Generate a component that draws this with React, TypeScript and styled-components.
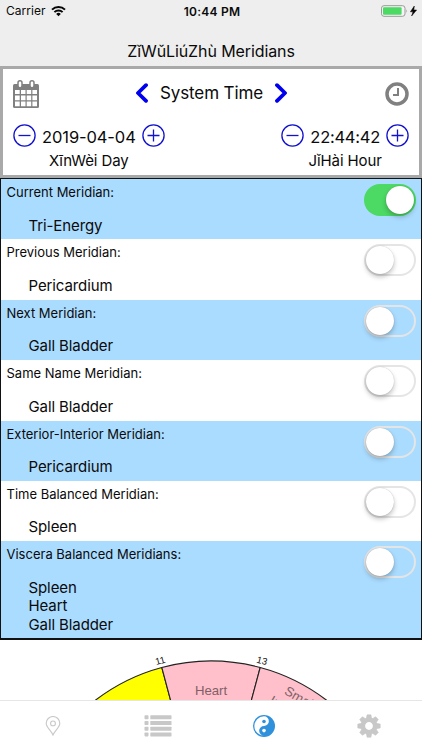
import React from "react";
import styled, { createGlobalStyle } from "styled-components";

const Global = createGlobalStyle`
  * { box-sizing: border-box; }
  body { margin: 0; background: #fff; overflow: hidden; }
`;

const Screen = styled.main`
  width: 422px;
  height: 750px;
  display: flex;
  flex-direction: column;
  overflow: hidden;
  background: #fff;
  color: #0a0a0a;
  font-family: Inter, "Liberation Sans", sans-serif;
`;

const Label = styled.span<{ $size: number; $spacing?: number; $weight?: number }>`
  font-size: ${(p) => p.$size}px;
  letter-spacing: ${(p) => p.$spacing ?? 0}px;
  font-weight: ${(p) => p.$weight ?? 400};
  white-space: nowrap;
`;

const Header = styled.header`
  height: 66px;
  flex: none;
  background: #eee;
`;

const StatusBar = styled.div`
  height: 22px;
  padding: 0 4px 0 6px;
  display: grid;
  grid-template-columns: 1fr auto 1fr;
  align-items: center;
`;

const StatusGroup = styled.div<{ $end?: boolean }>`
  display: flex;
  align-items: center;
  gap: 5px;
  padding-bottom: 1px;
  justify-content: ${(p) => (p.$end ? "flex-end" : "flex-start")};
`;

const Title = styled.h1`
  margin: 0;
  height: 44px;
  padding-top: 14px;
  display: flex;
  align-items: center;
  justify-content: center;
`;

const Panel = styled.section`
  height: 112px;
  flex: none;
  border: 3px solid #a9a9a9;
  padding: 9px 10px 0;
`;

const ModeRow = styled.div`
  height: 32px;
  display: flex;
  align-items: center;
  justify-content: space-between;
`;

const Mode = styled.div`
  margin: -3px 0 0 -1px;
  display: flex;
  align-items: center;
  gap: 12px;
`;

const Steppers = styled.div`
  margin-top: 13px;
  display: flex;
  justify-content: space-between;
`;

const StepperBlock = styled.div`
  display: flex;
  flex-direction: column;
  align-items: center;
`;

const Stepper = styled.div`
  height: 25px;
  display: flex;
  align-items: center;
  gap: 6px;
`;

const StepperValue = styled.div`
  padding-top: 2px;
`;

const Caption = styled.div`
  height: 24px;
  display: flex;
  align-items: center;
`;

const PlainButton = styled.button`
  border: 0;
  padding: 0;
  background: none;
  display: flex;
`;

const List = styled.section`
  height: 462px;
  flex: none;
  border: 1.5px solid #111;
  border-width: 1px 1px 2px 1px;
`;

const Row = styled.div<{ $shaded: boolean; $tall: boolean }>`
  height: ${(p) => (p.$tall ? 97 : 60.4)}px;
  padding: 4px 5px 0 5.5px;
  display: flex;
  justify-content: space-between;
  background: ${(p) => (p.$shaded ? "#aadcff" : "#fff")};
`;

const RowText = styled.div`
  display: flex;
  flex-direction: column;
  line-height: 18.5px;
`;

const Values = styled.div`
  margin: 15px 0 0 22px;
  display: flex;
  flex-direction: column;
`;

const Switch = styled.button<{ $on: boolean }>`
  width: 52px;
  height: 32px;
  margin-top: 1px;
  padding: ${(p) => (p.$on ? "2px" : "0")};
  border: 2px solid ${(p) => (p.$on ? "#4cd964" : "#e5e5e5")};
  border-width: ${(p) => (p.$on ? 0 : 2)}px;
  border-radius: 16px;
  background: ${(p) => (p.$on ? "#4cd964" : "transparent")};
  display: flex;
  justify-content: ${(p) => (p.$on ? "flex-end" : "flex-start")};
`;

const Knob = styled.span`
  width: 28px;
  height: 28px;
  border-radius: 50%;
  background: #fff;
  box-shadow: 0 3px 5px rgba(0, 0, 0, 0.24), 0 0 1px rgba(0, 0, 0, 0.25);
`;

const WheelArea = styled.section`
  height: 60px;
  flex: none;
  overflow: hidden;
  svg { display: block; }
`;

const TabBar = styled.nav`
  height: 50px;
  flex: none;
  border-top: 1px solid #e6e6e6;
  background: #fff;
  display: grid;
  grid-template-columns: repeat(4, 1fr);
`;

const Tab = styled.button`
  border: 0;
  padding: 0;
  background: none;
  display: flex;
  align-items: center;
  justify-content: center;
`;

const Wifi = () => (
  <svg width="15" height="12" viewBox="0 0 15 12" fill="none" stroke="#050505" strokeWidth="2">
    <path d="M1 4.6a9.2 9.2 0 0 1 13 0M3.4 7.1a5.8 5.8 0 0 1 8.2 0" />
    <path d="M5.2 8.9a3.3 3.3 0 0 1 4.6 0L7.5 11.3z" fill="#050505" stroke="none" />
  </svg>
);

const Battery = () => (
  <svg width="37" height="12" viewBox="0 0 37 12">
    <rect x=".5" y=".7" width="23.5" height="10.6" rx="2.5" fill="#f5f5f5" stroke="#999" />
    <rect x="2" y="2.2" width="18.6" height="7.6" rx="1" fill="#4cd964" />
    <path d="M25.3 4.2q1.5 1.8 0 3.6z" fill="#999" />
    <path d="M33.3 1 29.4 6.8h2.6L30.6 11l5-6h-2.8z" fill="#050505" stroke="#050505" strokeWidth=".5" />
  </svg>
);

const Calendar = () => (
  <svg width="26" height="28" viewBox="0 0 26 28">
    <rect y="4" width="26" height="24" rx="1.5" fill="#808080" />
    <path
      fill="#fff"
      d="M2 10h4.7v4H2zM8 10h4.5v4H8zM13.7 10h4.5v4h-4.5zM19.4 10H24v4h-4.6zM2 15.4h4.7v4.8H2zM8 15.4h4.5v4.8H8zM13.7 15.4h4.5v4.8h-4.5zM19.4 15.4H24v4.8h-4.6zM2 21.6h4.7v4.7H2zM8 21.6h4.5v4.7H8zM13.7 21.6h4.5v4.7h-4.5zM19.4 21.6H24v4.7h-4.6z"
    />
    <g fill="#fff" stroke="#808080" strokeWidth="1.5">
      <rect x="5" y=".8" width="4" height="7" rx="2" />
      <rect x="17" y=".8" width="4" height="7" rx="2" />
    </g>
  </svg>
);

const Clock = () => (
  <svg width="24" height="24" viewBox="0 0 24 24" fill="none" stroke="#808080">
    <circle cx="12" cy="12" r="10" strokeWidth="3.5" />
    <path d="M13 6v7H8" strokeWidth="2" />
  </svg>
);

const Chevron = ({ next = false }: { next?: boolean }) => (
  <svg width="12" height="20" viewBox="0 0 12 20" fill="none" stroke="#0000f0" strokeWidth="3.8" strokeLinecap="round" strokeLinejoin="round">
    <path d={next ? "M2 2.2 10 10 2 17.8" : "M10 2.2 2 10l8 7.8"} />
  </svg>
);

const StepIcon = ({ plus = false }: { plus?: boolean }) => (
  <svg width="23" height="23" viewBox="0 0 23 23" fill="none" stroke="#1212cf" strokeWidth="1.3">
    <circle cx="11.5" cy="11.5" r="10.6" />
    <path d={plus ? "M5.5 11.5h12M11.5 5.5v12" : "M5.5 11.5h12"} />
  </svg>
);

const Wheel = () => (
  <svg width="422" height="60" viewBox="0 640 422 60" fontFamily="'Liberation Sans', Arial, sans-serif">
    <g stroke="#222" strokeWidth="1.1">
      <path d="M211 851 46.5 756A190 190 0 0 1 161.8 667.5z" fill="#ff0" />
      <path d="M211 851 161.8 667.5A190 190 0 0 1 260.2 667.5z" fill="#ffc0cb" />
      <path d="M211 851 260.2 667.5A190 190 0 0 1 375.5 756z" fill="#ffc0cb" />
    </g>
    <g fontSize="9.5" fill="#111" textAnchor="middle">
      <text transform="translate(161 663.8) rotate(-15)">11</text>
      <text transform="translate(261.2 663.8) rotate(15)">13</text>
    </g>
    <g fontSize="13.2" fill="#806066">
      <text x="211" y="694.7" textAnchor="middle">Heart</text>
      <text transform="translate(283.5 693.5) rotate(30)">Small</text>
      <text transform="translate(268.5 703) rotate(30)">Intestine</text>
    </g>
  </svg>
);

const Pin = () => (
  <svg width="16" height="20" viewBox="0 0 16 20" fill="none" stroke="#c8c8c8" strokeWidth="1.1">
    <path d="M8 19C6.5 15 1.2 11.5 1.2 7.3a6.8 6.8 0 0 1 13.6 0C14.8 11.5 9.5 15 8 19z" />
    <circle cx="8" cy="7.4" r="2.4" />
  </svg>
);

const ListIcon = () => (
  <svg width="28" height="22" viewBox="0 0 28 22" fill="#c8c8c8">
    {[0.3, 6, 11.7, 17.4].map((y) => (
      <g key={y}>
        <rect x=".5" y={y} width="4" height="4" rx=".8" />
        <rect x="6.3" y={y} width="21.2" height="4" rx=".6" />
      </g>
    ))}
  </svg>
);

const YinYang = () => (
  <svg width="22" height="22" viewBox="0 0 22 22">
    <circle cx="11" cy="11" r="11" fill="#2f91dc" />
    <path d="M11 1.3a9.7 9.7 0 0 0 0 19.4 4.85 4.85 0 0 1 0-9.7 4.85 4.85 0 0 0 0-9.7z" fill="#fff" />
    <circle cx="11" cy="6.5" r="1.8" fill="#2f91dc" />
    <circle cx="11" cy="15.6" r="1.8" fill="#fff" />
  </svg>
);

const Gear = () => (
  <svg width="24" height="24" viewBox="-12 -12 24 24" fill="#c8c8c8">
    {[0, 45, 90, 135, 180, 225, 270, 315].map((a) => (
      <path key={a} transform={`rotate(${a})`} d="M-2.8-7-1.9-11.2h3.8L2.8-7z" stroke="#c8c8c8" strokeWidth=".6" strokeLinejoin="round" />
    ))}
    <circle r="6.1" fill="none" stroke="#c8c8c8" strokeWidth="4.4" />
  </svg>
);

const meridians = [
  { name: "Current Meridian:", values: ["Tri-Energy"], on: true },
  { name: "Previous Meridian:", values: ["Pericardium"], on: false },
  { name: "Next Meridian:", values: ["Gall Bladder"], on: false },
  { name: "Same Name Meridian:", values: ["Gall Bladder"], on: false },
  { name: "Exterior-Interior Meridian:", values: ["Pericardium"], on: false },
  { name: "Time Balanced Meridian:", values: ["Spleen"], on: false },
  { name: "Viscera Balanced Meridians:", values: ["Spleen", "Heart", "Gall Bladder"], on: false },
];

const DateStepper = ({ value, caption, time = false }: { value: string; caption: string; time?: boolean }) => (
  <StepperBlock>
    <Stepper>
      <PlainButton aria-label="Decrease"><StepIcon /></PlainButton>
      <StepperValue><Label $size={16.5} $spacing={time ? -0.25 : -0.1}>{value}</Label></StepperValue>
      <PlainButton aria-label="Increase"><StepIcon plus /></PlainButton>
    </Stepper>
    <Caption><Label $size={15} $spacing={-0.1}>{caption}</Label></Caption>
  </StepperBlock>
);

export default function App() {
  return (
    <>
      <Global />
      <Screen>
        <Header>
          <StatusBar>
            <StatusGroup>
              <Label $size={12} $spacing={0.05}>Carrier</Label>
              <Wifi />
            </StatusGroup>
            <Label $size={12} $spacing={0.25} $weight={600}>10:44 PM</Label>
            <StatusGroup $end><Battery /></StatusGroup>
          </StatusBar>
          <Title><Label $size={16} $spacing={-0.1}>ZǐWǔLiúZhù Meridians</Label></Title>
        </Header>
        <Panel>
          <ModeRow>
            <PlainButton aria-label="Calendar"><Calendar /></PlainButton>
            <Mode>
              <PlainButton aria-label="Previous"><Chevron /></PlainButton>
              <Label $size={17} $spacing={-0.1}>System Time</Label>
              <PlainButton aria-label="Next"><Chevron next /></PlainButton>
            </Mode>
            <PlainButton aria-label="Clock"><Clock /></PlainButton>
          </ModeRow>
          <Steppers>
            <DateStepper value="2019-04-04" caption="XīnWèi Day" />
            <DateStepper value="22:44:42" caption="JǐHài Hour" time />
          </Steppers>
        </Panel>
        <List>
          {meridians.map((m, i) => (
            <Row key={m.name} $shaded={i % 2 === 0} $tall={m.values.length > 1}>
              <RowText>
                <Label $size={13} $spacing={0}>{m.name}</Label>
                <Values>
                  {m.values.map((v) => <Label key={v} $size={15} $spacing={-0.1}>{v}</Label>)}
                </Values>
              </RowText>
              <Switch $on={m.on} role="switch" aria-checked={m.on} aria-label={m.name}><Knob /></Switch>
            </Row>
          ))}
        </List>
        <WheelArea><Wheel /></WheelArea>
        <TabBar>
          <Tab aria-label="Points"><Pin /></Tab>
          <Tab aria-label="List"><ListIcon /></Tab>
          <Tab aria-label="Meridians"><YinYang /></Tab>
          <Tab aria-label="Settings"><Gear /></Tab>
        </TabBar>
      </Screen>
    </>
  );
}
